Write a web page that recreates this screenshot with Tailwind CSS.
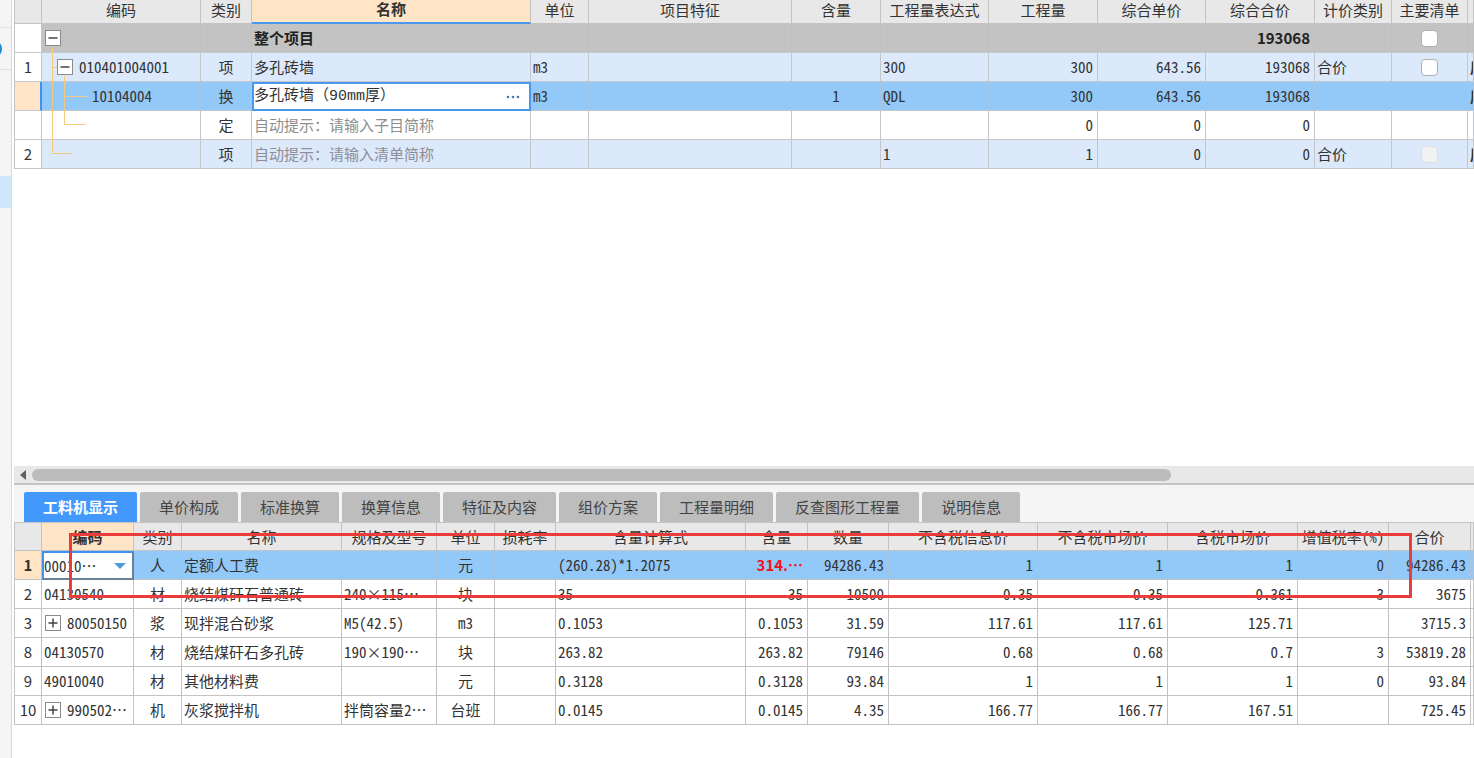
<!DOCTYPE html>
<html lang="zh-CN">
<head>
<meta charset="utf-8">
<meta name="viewport" content="width=device-width, initial-scale=1">
<title>工料机显示</title>
<script src="https://cdn.jsdelivr.net/npm/@tailwindcss/browser@4"></script>
</head>
<body class="flex min-h-screen overflow-hidden bg-white font-['Noto_Sans_CJK_SC',sans-serif] text-[15px] leading-5 text-[#333] [font-feature-settings:'hwid']">

<!-- Collapsed side rail -->
<nav aria-label="侧栏" class="flex w-3 shrink-0 flex-col overflow-hidden border-r border-[#d9d9d9] bg-[#f5f5f5]">
  <div class="h-7 border-b border-[#e0e0e0]"></div>
  <div class="flex h-[42px] items-center border-b border-[#e0e0e0]">
    <span class="-ml-4 size-[18px] shrink-0 rounded-full bg-[#1e88d2]"></span>
  </div>
  <div class="mt-[106px] h-8 bg-[#cfe6fd]"></div>
</nav>

<main class="flex min-w-0 flex-1 flex-col">

  <!-- Bill of quantities -->
  <section class="relative flex-1 overflow-hidden pl-0.5">
    <table class="w-full table-fixed border-separate border-spacing-0 whitespace-nowrap border-l border-[#c3c3c3]
      [&_td]:h-[29px] [&_td]:overflow-hidden [&_td]:border-r [&_td]:border-b [&_td]:border-[#c3c6cb] [&_td]:px-0.5 [&_th]:h-6 [&_th]:border-r [&_th]:border-b [&_th]:border-[#c3c3c3] [&_th]:pb-1 [&_th]:font-normal">
      <colgroup>
        <col class="w-[27px]"><col class="w-[159px]"><col class="w-[51px]"><col class="w-[279px]"><col class="w-[58px]"><col class="w-[203px]"><col class="w-[89px]"><col class="w-[108px]"><col class="w-[109px]"><col class="w-[108px]"><col class="w-[109px]"><col class="w-[77px]"><col class="w-[76px]"><col>
      </colgroup>
      <thead class="bg-[#e8e8e8]">
        <tr class="leading-4">
          <th></th><th>编码</th><th>类别</th>
          <th class="border-b-2! border-b-[#4a98ee]! bg-[#ffe4c6] font-bold!">名称</th>
          <th>单位</th><th>项目特征</th><th>含量</th><th>工程量表达式</th><th>工程量</th><th>综合单价</th><th>综合合价</th><th>计价类别</th><th>主要清单</th><th></th>
        </tr>
      </thead>
      <tbody>
        <tr class="bg-[#c3c3c3] font-bold text-[#222] [&>td:not(:first-child)]:border-r-[#c0c0c0]">
          <td class="bg-white"></td>
          <td class="pl-[3px]!"><button type="button" aria-label="折叠" class="flex size-4 items-center justify-center border border-[#8a8a8a] bg-white"><svg class="size-3" viewBox="0 0 12 12" stroke="#444" stroke-width="1.500"><path d="M1.500 6H10.500"/></svg></button></td>
          <td></td><td>整个项目</td><td></td><td></td><td></td><td></td><td></td><td></td>
          <td class="pr-1! text-right [font-feature-settings:normal]">193068</td>
          <td></td>
          <td><input type="checkbox" aria-label="主要清单 整个项目" class="mx-auto block size-[17px] appearance-none rounded-sm border border-[#b0b0b0] bg-white"></td>
          <td></td>
        </tr>
        <tr class="bg-[#dce9fb]">
          <td class="bg-white text-center [font-feature-settings:normal]">1</td>
          <td class="pl-[15px]!"><div class="flex items-center gap-1.5"><button type="button" aria-label="折叠" class="flex size-4 items-center justify-center border border-[#8a8a8a] bg-white"><svg class="size-3" viewBox="0 0 12 12" stroke="#444" stroke-width="1.500"><path d="M1.500 6H10.500"/></svg></button><span>010401004001</span></div></td>
          <td class="text-center">项</td><td>多孔砖墙</td><td>m3</td><td></td><td></td><td>300</td>
          <td class="pr-1! text-right">300</td><td class="pr-1! text-right">643.56</td><td class="pr-1! text-right">193068</td>
          <td>合价</td>
          <td><input type="checkbox" aria-label="主要清单 1" class="mx-auto block size-[17px] appearance-none rounded-sm border border-[#b0b0b0] bg-white"></td>
          <td class="font-bold">房</td>
        </tr>
        <tr class="bg-[#93c9f8] [&>td]:border-r-[#a9c4de]">
          <td class="border-r-2! border-r-[#3f92f0]! bg-[#ffe4c6]"></td>
          <td class="pl-[50px]!">10104004</td><td class="text-center">换</td>
          <td class="border-0! p-0!">
            <div class="flex h-[29px] items-center border-2 border-[#4a98ee] bg-white pr-2">
              <input type="text" aria-label="名称" value="多孔砖墙（90mm厚）" class="min-w-0 flex-1 bg-transparent font-['Liberation_Mono','Noto_Sans_CJK_SC',monospace] outline-none [font-feature-settings:normal]">
              <button type="button" aria-label="更多" class="flex h-5 w-4 items-center justify-center"><svg class="h-1 w-3.5" viewBox="0 0 14 4" fill="#4a78b0"><circle cx="2" cy="2" r="1.300"/><circle cx="7" cy="2" r="1.300"/><circle cx="12" cy="2" r="1.300"/></svg></button>
            </div>
          </td>
          <td>m3</td><td></td><td class="text-center">1</td><td>QDL</td>
          <td class="pr-1! text-right">300</td><td class="pr-1! text-right">643.56</td><td class="pr-1! text-right">193068</td>
          <td></td><td></td><td class="font-bold">房</td>
        </tr>
        <tr>
          <td></td><td></td><td class="text-center">定</td><td class="text-[#8e8e8e]">自动提示：请输入子目简称</td><td></td><td></td><td></td><td></td>
          <td class="pr-1! text-right">0</td><td class="pr-1! text-right">0</td><td class="pr-1! text-right">0</td>
          <td></td><td></td><td class="pl-1!"><div class="h-3 bg-[#ececec]"></div></td>
        </tr>
        <tr class="bg-[#dce9fb]">
          <td class="bg-white text-center [font-feature-settings:normal]">2</td>
          <td></td><td class="text-center">项</td><td class="text-[#8e8e98]">自动提示：请输入清单简称</td><td></td><td></td><td></td><td>1</td>
          <td class="pr-1! text-right">1</td><td class="pr-1! text-right">0</td><td class="pr-1! text-right">0</td>
          <td>合价</td>
          <td><input type="checkbox" disabled aria-label="主要清单 2" class="mx-auto block size-[17px] appearance-none rounded-sm border border-[#dedede] bg-[#f0f1f2]"></td>
          <td class="font-bold">房</td>
        </tr>
      </tbody>
    </table>
    <!-- Tree connectors over the code column -->
    <svg class="pointer-events-none absolute top-6 left-[30px] h-[140px] w-[60px]" viewBox="0 0 60 140" fill="none" stroke="#f2cb80" aria-hidden="true">
      <path d="M10.500 23V129.500H30M10.500 43.500H15M22.500 52V100.500H44M22.500 72.500H46"/>
    </svg>
  </section>

  <!-- Horizontal scrollbar -->
  <div class="ml-0.5 flex h-[17px] items-center bg-[#e8e8e8]">
    <button type="button" aria-label="向左滚动" class="flex h-4 w-[18px] items-center justify-center"><svg class="h-2.5 w-1.5" viewBox="0 0 6 10" fill="#606060"><path d="M6 0V10L0 5Z"/></svg></button>
    <div class="h-3 w-[78%] rounded-full bg-[#bcbcbc]"></div>
  </div>

  <!-- Resource breakdown -->
  <section class="relative bg-white pb-[33px] pl-0.5">
    <div role="tablist" class="flex gap-[3px] border-t-2 border-b border-[#c4c4c4] bg-[#f5f5f5] pt-[7px] pl-2.5 text-[#444] [&>button]:h-[30px] [&>button]:rounded-t-xs [&>button]:px-[19px] [&>button]:whitespace-nowrap">
      <button type="button" role="tab" aria-selected="true" class="bg-[#4398fb] font-bold text-white">工料机显示</button>
      <button type="button" role="tab" class="bg-[#bdbdbd]">单价构成</button>
      <button type="button" role="tab" class="bg-[#bdbdbd]">标准换算</button>
      <button type="button" role="tab" class="bg-[#bdbdbd]">换算信息</button>
      <button type="button" role="tab" class="bg-[#bdbdbd]">特征及内容</button>
      <button type="button" role="tab" class="bg-[#bdbdbd]">组价方案</button>
      <button type="button" role="tab" class="bg-[#bdbdbd]">工程量明细</button>
      <button type="button" role="tab" class="bg-[#bdbdbd]">反查图形工程量</button>
      <button type="button" role="tab" class="bg-[#bdbdbd]">说明信息</button>
    </div>
    <table class="w-full table-fixed border-separate border-spacing-0 whitespace-nowrap border-l border-[#c3c3c3]
      [&_td]:h-[29px] [&_td]:overflow-hidden [&_td]:border-r [&_td]:border-b [&_td]:border-[#c3c3c3] [&_td]:px-0.5 [&_th]:h-7 [&_th]:border-r [&_th]:border-b [&_th]:border-[#c3c3c3] [&_th]:font-normal">
      <colgroup>
        <col class="w-[27px]"><col class="w-[92px]"><col class="w-[48px]"><col class="w-[160px]"><col class="w-[95px]"><col class="w-[58px]"><col class="w-[61px]"><col class="w-[190px]"><col class="w-[62px]"><col class="w-[81px]"><col class="w-[149px]"><col class="w-[130px]"><col class="w-[130px]"><col class="w-[91px]"><col class="w-[82px]"><col>
      </colgroup>
      <thead class="bg-[#e8e8e8]">
        <tr>
          <th></th><th class="bg-[#ffe4c6] font-bold!">编码</th><th>类别</th><th>名称</th><th>规格及型号</th><th>单位</th><th>损耗率</th><th>含量计算式</th><th>含量</th><th>数量</th><th>不含税信息价</th><th>不含税市场价</th><th>含税市场价</th><th>增值税率(%)</th><th>合价</th><th></th>
        </tr>
      </thead>
      <tbody class="[&_td:nth-child(1)]:text-center [&_td:nth-child(1)]:[font-feature-settings:normal] [&_td:nth-child(3)]:text-center [&_td:nth-child(6)]:text-center [&_td:nth-child(n+9)]:pr-1 [&_td:nth-child(n+9)]:text-right">
        <tr class="bg-[#93c9f8] [&>td]:border-r-[#a9c4de]">
          <td class="bg-[#ffe4c6] font-bold">1</td>
          <td class="border-0! p-0!">
            <div class="relative flex h-[29px] items-center border-2 border-t-[#3f92f0] border-r-[#6c8096] border-b-[#6c8096] border-l-[#3f92f0] bg-white">
              <select aria-label="编码" class="w-full appearance-none bg-transparent outline-none"><option>00010…</option></select>
              <svg class="pointer-events-none absolute right-1.5 h-1.5 w-3" viewBox="0 0 12 6" fill="#4f9bd6" aria-hidden="true"><path d="M0 0H12L6 6Z"/></svg>
            </div>
          </td>
          <td>人</td><td>定额人工费</td><td></td><td>元</td><td></td><td>(260.28)*1.2075</td>
          <td class="font-bold text-[#f01420] [font-feature-settings:normal]">314.…</td><td>94286.43</td><td>1</td><td>1</td><td>1</td><td>0</td><td>94286.43</td><td></td>
        </tr>
        <tr>
          <td>2</td><td>04130540</td><td>材</td><td>烧结煤矸石普通砖</td><td>240×115…</td><td>块</td><td></td><td>35</td>
          <td>35</td><td>10500</td><td>0.35</td><td>0.35</td><td>0.361</td><td>3</td><td>3675</td><td></td>
        </tr>
        <tr>
          <td>3</td>
          <td><div class="flex items-center gap-1.5 pl-px"><button type="button" aria-label="展开" class="flex size-4 shrink-0 items-center justify-center border border-[#8a8a8a] bg-white"><svg class="size-3" viewBox="0 0 12 12" stroke="#444" stroke-width="1.500"><path d="M1.500 6H10.500M6 1.500V10.500"/></svg></button><span>80050150</span></div></td>
          <td>浆</td><td>现拌混合砂浆</td><td>M5(42.5)</td><td>m3</td><td></td><td>0.1053</td>
          <td>0.1053</td><td>31.59</td><td>117.61</td><td>117.61</td><td>125.71</td><td></td><td>3715.3</td><td></td>
        </tr>
        <tr>
          <td>8</td><td>04130570</td><td>材</td><td>烧结煤矸石多孔砖</td><td>190×190…</td><td>块</td><td></td><td>263.82</td>
          <td>263.82</td><td>79146</td><td>0.68</td><td>0.68</td><td>0.7</td><td>3</td><td>53819.28</td><td></td>
        </tr>
        <tr>
          <td>9</td><td>49010040</td><td>材</td><td>其他材料费</td><td></td><td>元</td><td></td><td>0.3128</td>
          <td>0.3128</td><td>93.84</td><td>1</td><td>1</td><td>1</td><td>0</td><td>93.84</td><td></td>
        </tr>
        <tr>
          <td>10</td>
          <td><div class="flex items-center gap-1.5 pl-px"><button type="button" aria-label="展开" class="flex size-4 shrink-0 items-center justify-center border border-[#8a8a8a] bg-white"><svg class="size-3" viewBox="0 0 12 12" stroke="#444" stroke-width="1.500"><path d="M1.500 6H10.500M6 1.500V10.500"/></svg></button><span>990502…</span></div></td>
          <td>机</td><td>灰浆搅拌机</td><td>拌筒容量2…</td><td>台班</td><td></td><td>0.0145</td>
          <td>0.0145</td><td>4.35</td><td>166.77</td><td>166.77</td><td>167.51</td><td></td><td>725.45</td><td></td>
        </tr>
      </tbody>
    </table>
    <!-- Red marker around the labour row -->
    <div class="pointer-events-none absolute top-[50px] right-[62px] left-[57px] h-[65px] border-3 border-[#ec3b3b]"></div>
  </section>
</main>
</body>
</html>
